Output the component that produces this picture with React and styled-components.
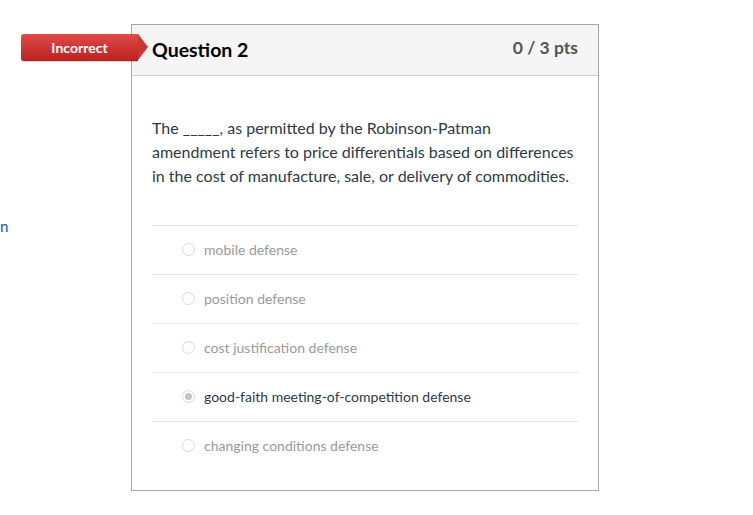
import React from 'react';
import styled, { createGlobalStyle } from 'styled-components';

const GlobalStyle = createGlobalStyle`
  body {
    margin: 0;
    background: #fff;
    font-family: Lato, 'Open Sans', Arial, sans-serif;
  }
`;

const Page = styled.div`
  display: flex;
  align-items: flex-start;
  width: 753px;
  height: 515px;
  overflow: hidden;
`;

const Sidebar = styled.div`
  width: 131px;
  flex-shrink: 0;
  padding-top: 217px;
  overflow: hidden;
`;

const SideLink = styled.a`
  display: block;
  color: #0b54c4;
  font-size: 15px;
  line-height: 18px;
  text-decoration: none;
`;

const Card = styled.div`
  position: relative;
  margin-top: 24px;
  width: 466px;
  border: 1px solid #a9a9a9;
  background: #fff;
`;

const CardHeader = styled.div`
  display: flex;
  justify-content: space-between;
  align-items: flex-start;
  height: 50px;
  padding: 0 20px;
  background: #f5f5f5;
  border-bottom: 1px solid #c7cdd1;
`;

const Title = styled.h2`
  margin: 12px 0 0;
  font-size: 19.5px;
  font-weight: 700;
  color: #000;
  line-height: 26px;
`;

const Points = styled.span`
  margin-top: 12px;
  font-size: 17.5px;
  font-weight: 700;
  color: #555;
  line-height: 22px;
`;

const Badge = styled.div`
  position: absolute;
  left: -111px;
  top: 9px;
  width: 117px;
  height: 27px;
  display: flex;
  align-items: center;
  justify-content: center;
  color: #fff;
  font-size: 14px;
  font-weight: 700;
  background: linear-gradient(#e34a47, #b8221f);
  border-radius: 3px 0 0 3px;
  box-shadow: 0 1px 1px rgba(0, 0, 0, 0.2);

  &::after {
    content: '';
    position: absolute;
    right: -10px;
    top: 0;
    width: 0;
    height: 0;
    border-top: 13.5px solid transparent;
    border-bottom: 13.5px solid transparent;
    border-left: 10px solid #cd3532;
  }
`;

const Body = styled.div`
  padding: 40px 20px 20px;
`;

const QuestionText = styled.p`
  margin: 0 0 37px;
  font-size: 16px;
  line-height: 24px;
  color: #2d3b45;
`;

const AnswerList = styled.div`
  display: flex;
  flex-direction: column;
`;

const AnswerRow = styled.label`
  display: flex;
  align-items: center;
  gap: 9px;
  height: 49px;
  box-sizing: border-box;
  padding: 0 0 1px 30px;
  border-top: 1px solid #e6e6e6;
  font-size: 14px;
  color: ${(p) => (p.$selected ? '#2d3b45' : '#9a9a9a')};
`;

const Radio = styled.span`
  position: relative;
  width: 11px;
  height: 11px;
  border: 1px solid #d8d8d8;
  border-radius: 50%;
  background: #fff;
  flex-shrink: 0;

  &::after {
    content: '';
    display: ${(p) => (p.$checked ? 'block' : 'none')};
    position: absolute;
    left: 2px;
    top: 2px;
    width: 7px;
    height: 7px;
    border-radius: 50%;
    background: #c4c4c4;
  }
`;

const answers = [
  { text: 'mobile defense' },
  { text: 'position defense' },
  { text: 'cost justification defense' },
  { text: 'good-faith meeting-of-competition defense', selected: true },
  { text: 'changing conditions defense' },
];

export default function App() {
  return (
    <>
      <GlobalStyle />
      <Page>
        <Sidebar>
          <SideLink href="#">n</SideLink>
        </Sidebar>
        <Card>
          <Badge>Incorrect</Badge>
          <CardHeader>
            <Title>Question 2</Title>
            <Points>0 / 3 pts</Points>
          </CardHeader>
          <Body>
            <QuestionText>
              The _____, as permitted by the Robinson-Patman amendment refers to price
              differentials based on differences in the cost of manufacture, sale, or
              delivery of commodities.
            </QuestionText>
            <AnswerList>
              {answers.map((a) => (
                <AnswerRow key={a.text} $selected={a.selected}>
                  <Radio $checked={a.selected} />
                  {a.text}
                </AnswerRow>
              ))}
            </AnswerList>
          </Body>
        </Card>
      </Page>
    </>
  );
}
